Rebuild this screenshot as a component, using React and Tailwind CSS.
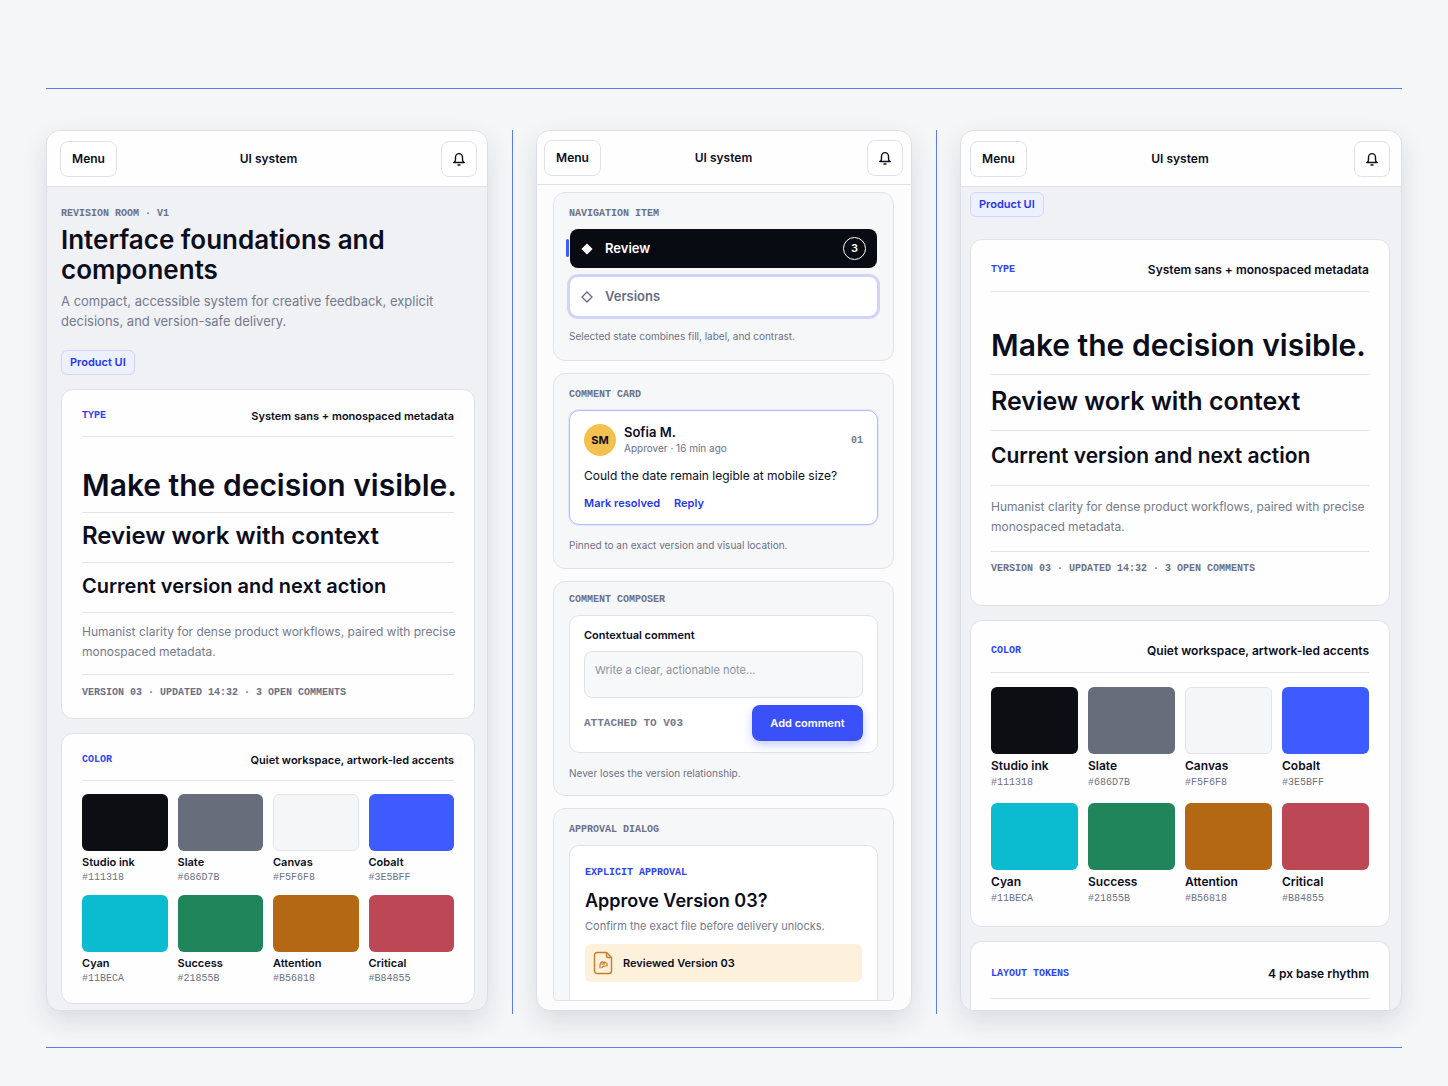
import React from "react";

const SWATCHES = [
  { name: "Studio ink", hex: "#111318", fill: "bg-[#0c0e14]" },
  { name: "Slate", hex: "#686D7B", fill: "bg-[#686d7b]" },
  { name: "Canvas", hex: "#F5F6F8", fill: "bg-[#f5f6f8] border border-[#e2e4ea]" },
  { name: "Cobalt", hex: "#3E5BFF", fill: "bg-[#3e5bff]" },
  { name: "Cyan", hex: "#11BECA", fill: "bg-[#0bbcd0]" },
  { name: "Success", hex: "#21855B", fill: "bg-[#21855b]" },
  { name: "Attention", hex: "#B56818", fill: "bg-[#b56813]" },
  { name: "Critical", hex: "#B84855", fill: "bg-[#bb4854]" },
];

// Spacing for the two densities of the foundation cards
const DENSITY = {
  compact: {
    header: "pt-[18px] pb-3",
    title: "text-[11px]",
    display: "pt-7 pb-[7px]",
    heading: "pt-2 pb-[11px] text-[24px]",
    subheading: "pt-2 pb-[11px] text-[20px]",
    copy: "pt-[9px] pb-3",
    meta: "pt-[10px] pb-[17px]",
    grid: "pt-[13px] pb-4 gap-y-[9px]",
    swatch: "h-[57px] mb-[3px]",
    name: "text-[11px]",
  },
  roomy: {
    header: "pt-[22px] pb-[13px]",
    title: "text-[12px]",
    display: "pt-[33px] pb-[9px]",
    heading: "pt-[11px] pb-[14px] text-[25px]",
    subheading: "pt-[10px] pb-[14px] text-[21px]",
    copy: "pt-[11px] pb-[14px]",
    meta: "pt-[9px] pb-7",
    grid: "pt-[14px] pb-[19px] gap-y-3",
    swatch: "h-[67px] mb-1",
    name: "text-[12px] mb-px",
  },
};

const MONO = "font-['Liberation_Mono',monospace]";

const BellIcon = () => (
  <svg
    viewBox="0 0 16 16"
    className="h-4 w-4"
    fill="none"
    stroke="currentColor"
    strokeWidth="1.4"
    strokeLinecap="round"
    strokeLinejoin="round"
  >
    <path d="M2.6 11.5h10.8" />
    <path d="M3.6 11.3c.7-.9.9-1.800.9-3V6.300a3.500 3.700 0 0 1 7 0v2c0 1.200.2 2.100.9 3" />
    <path d="M7 14h2" />
  </svg>
);

const TopBar = ({ className }) => (
  <header
    className={`grid grid-cols-[1fr_auto_1fr] items-center border-b border-[#dfe2ec] bg-[#fefefe] ${className}`}
  >
    <button className="h-9 w-[57px] justify-self-start rounded-lg border border-[#dfe2ec] bg-white text-[12px] font-semibold">
      Menu
    </button>
    <p className="text-[12px] font-semibold">UI system</p>
    <button
      aria-label="Notifications"
      className="flex h-9 w-9 items-center justify-center justify-self-end rounded-lg border border-[#dfe2ec] bg-white"
    >
      <BellIcon />
    </button>
  </header>
);

const Chip = () => (
  <span className="flex h-[25px] w-fit items-center rounded-md border border-[#cfd5fb] bg-[#edf0fd] px-2 text-[11px] font-semibold text-[#2436f0]">
    Product UI
  </span>
);

const CardHeader = ({ label, title, density, className }) => (
  <div
    className={`flex items-center justify-between border-b border-[#e1e4ed] leading-4 ${
      className || density.header
    }`}
  >
    <h3 className={`text-[10px] font-bold text-[#2f43f5] ${MONO}`}>{label}</h3>
    <p className={`font-semibold ${density.title}`}>{title}</p>
  </div>
);

const TypeCard = ({ density }) => (
  <section className="rounded-xl border border-[#dfe2ec] bg-[#fefefe] px-5">
    <CardHeader label="TYPE" title="System sans + monospaced metadata" density={density} />
    <div className="divide-y divide-[#e1e4ed]">
      <p className={`whitespace-nowrap text-[30px] font-semibold leading-10 ${density.display}`}>
        Make the decision visible.
      </p>
      <p className={`whitespace-nowrap font-semibold leading-[30px] ${density.heading}`}>
        Review work with context
      </p>
      <p className={`whitespace-nowrap font-semibold leading-[30px] ${density.subheading}`}>
        Current version and next action
      </p>
      <p className={`whitespace-nowrap text-[12px] leading-5 text-[#737a8e] ${density.copy}`}>
        Humanist clarity for dense product workflows, paired with precise
        <br />
        monospaced metadata.
      </p>
      <p className={`text-[10px] font-bold leading-4 text-[#6b7186] ${MONO} ${density.meta}`}>
        VERSION 03 · UPDATED 14:32 · 3 OPEN COMMENTS
      </p>
    </div>
  </section>
);

const ColorCard = ({ density }) => (
  <section className="rounded-xl border border-[#dfe2ec] bg-[#fefefe] px-5">
    <CardHeader label="COLOR" title="Quiet workspace, artwork-led accents" density={density} />
    <ul className={`grid grid-cols-4 gap-x-[10px] ${density.grid}`}>
      {SWATCHES.map((swatch) => (
        <li key={swatch.name}>
          <div className={`rounded-md ${swatch.fill} ${density.swatch}`} />
          <p className={`font-semibold leading-4 ${density.name}`}>{swatch.name}</p>
          <p className={`text-[10px] leading-4 text-[#6b7186] ${MONO}`}>{swatch.hex}</p>
        </li>
      ))}
    </ul>
  </section>
);

// A labelled example with a caption under it
const Specimen = ({ label, caption, className, children }) => (
  <section className={`border border-[#dfe2ea] bg-[#f6f7f9] px-[15px] ${className}`}>
    <h3 className={`mb-[7px] text-[10px] font-bold leading-4 text-[#6b7186] ${MONO}`}>{label}</h3>
    {children}
    {caption && <p className="mt-3 text-[10px] leading-4 text-[#6b7186]">{caption}</p>}
  </section>
);

const NavItems = () => (
  <nav className="flex flex-col gap-[9px] px-px">
    <a
      href="#review"
      className="relative flex h-[39px] items-center rounded-lg bg-[#090b13] px-[11px] text-[13px] font-semibold text-white"
    >
      <span className="absolute -left-1 top-[10px] h-[18px] w-[3px] rounded-sm bg-[#3e5bff]" />
      <svg viewBox="0 0 12 12" className="mr-3 h-3 w-3" fill="currentColor">
        <path d="M6 0.4 11.6 6 6 11.6 0.4 6Z" />
      </svg>
      Review
      <span className="ml-auto flex h-[23px] w-[23px] items-center justify-center rounded-full border border-white text-[11px]">
        3
      </span>
    </a>
    <a
      href="#versions"
      className="flex h-[39px] items-center rounded-lg bg-white px-[11px] text-[13px] font-semibold text-[#666c85] ring-[3px] ring-[#d0d4f8]"
    >
      <svg viewBox="0 0 12 12" className="mr-3 h-3 w-3" fill="none" stroke="currentColor" strokeWidth="1.3">
        <path d="M6 1 11 6 6 11 1 6Z" />
      </svg>
      Versions
    </a>
  </nav>
);

const CommentCard = () => (
  <article className="rounded-[10px] border border-[#b4bcfb] bg-white px-[14px] py-[13px] ring-1 ring-[#e4e7fd]">
    <div className="flex items-center">
      <span className="mr-2 flex h-8 w-8 items-center justify-center rounded-full bg-[#f4c150] text-[11px] font-bold">
        SM
      </span>
      <div className="leading-4">
        <p className="text-[13px] font-semibold">Sofia M.</p>
        <p className="text-[10px] text-[#6b7186]">Approver · 16 min ago</p>
      </div>
      <span className={`ml-auto text-[10px] font-bold text-[#737a8e] ${MONO}`}>01</span>
    </div>
    <p className="mt-[10px] text-[12px] leading-5">Could the date remain legible at mobile size?</p>
    <div className="mt-[9px] flex gap-[14px] text-[11px] font-semibold leading-4 text-[#2436f0]">
      <button>Mark resolved</button>
      <button>Reply</button>
    </div>
  </article>
);

const Composer = () => (
  <form
    className="rounded-[10px] border border-[#dfe2ea] bg-white px-[14px] py-[11px]"
    onSubmit={(e) => e.preventDefault()}
  >
    <label htmlFor="note" className="block text-[11px] font-semibold leading-4">
      Contextual comment
    </label>
    <textarea
      id="note"
      placeholder="Write a clear, actionable note..."
      className="mt-2 block h-[47px] w-full resize-none rounded-lg border border-[#dfe2ea] bg-[#f7f8fa] p-[10px] text-[11px] leading-4 placeholder:text-[#8a90a3]"
    />
    <div className="mt-[7px] flex items-center justify-between">
      <span className={`text-[11px] font-bold text-[#737a8e] ${MONO}`}>ATTACHED TO V03</span>
      <button className="h-9 w-[111px] rounded-lg bg-[#3a50f8] text-[11px] font-semibold text-white shadow-[0_4px_10px_rgba(62,91,255,0.3)]">
        Add comment
      </button>
    </div>
  </form>
);

const ApprovalDialog = () => (
  <div className="rounded-t-[10px] border border-b-0 border-[#dfe2ea] bg-white px-[15px] pb-[18px] pt-[19px]">
    <p className={`text-[10px] font-bold leading-4 text-[#2f43f5] ${MONO}`}>EXPLICIT APPROVAL</p>
    <h2 className="mt-[6px] text-[18px] font-semibold leading-7">Approve Version 03?</h2>
    <p className="mt-px text-[11px] leading-5 text-[#737a8e]">
      Confirm the exact file before delivery unlocks.
    </p>
    <div className="mt-2 flex h-[38px] items-center rounded-md bg-[#fef1dc] px-2 text-[11px] font-semibold">
      <svg
        viewBox="0 0 20 24"
        className="mr-[10px] h-6 w-5"
        fill="none"
        stroke="#c67b2b"
        strokeWidth="1.4"
        strokeLinecap="round"
        strokeLinejoin="round"
      >
        <path d="M4 1.5h9.5l5 5V20a2.5 2.5 0 0 1-2.5 2.5H4A2.5 2.5 0 0 1 1.5 20V4A2.5 2.5 0 0 1 4 1.5Z" />
        <path d="M13.5 2v3A1.5 1.5 0 0 0 15 6.5h3" />
        <path d="M7 17v-4h4.5M7.5 12l2-1.5L11 12M11.5 11l2.5 1.5V15h-3.5M9 16.5l1.5-1.5" strokeWidth="1.2" />
      </svg>
      Reviewed Version 03
    </div>
  </div>
);

const Panel = ({ className, children }) => (
  <div
    className={`flex min-w-0 flex-col overflow-hidden rounded-[14px] border border-[#dcdfe6] shadow-[0_10px_24px_rgba(30,36,60,0.12)] ${className}`}
  >
    {children}
  </div>
);

const Divider = () => <div className="-mb-[3px] w-px justify-self-center bg-[#5c7cf5]" />;

const App = () => {
  return (
    <div className="min-h-screen bg-[#f5f6f8] px-[46px] pb-[37px] pt-[88px] font-['Inter',sans-serif] text-[#0b0d1c]">
      <main className="grid grid-cols-[442fr_48px_376fr_48px_442fr] border-y border-[#5c7cf5] pb-9 pt-[41px]">
        {/* Foundations, top of the page */}
        <Panel className="bg-[#eff1f5]">
          <TopBar className="h-14 pl-[13px] pr-[10px]" />
          <div className="pb-[6px] pl-[14px] pr-3 pt-[19px]">
            <p className={`text-[10px] font-bold leading-4 text-[#6b7186] ${MONO}`}>REVISION ROOM · V1</p>
            <h1 className="mt-[3px] text-[26px] font-semibold leading-[30px]">
              Interface foundations and components
            </h1>
            <p className="mb-[19px] mt-[6px] text-[13px] leading-5 text-[#737a8e]">
              A compact, accessible system for creative feedback, explicit decisions, and version-safe delivery.
            </p>
            <Chip />
            <div className="mt-[14px] flex flex-col gap-[14px]">
              <TypeCard density={DENSITY.compact} />
              <ColorCard density={DENSITY.compact} />
            </div>
          </div>
        </Panel>

        <Divider />

        {/* Components */}
        <Panel className="bg-[#fcfcfd]">
          <TopBar className="h-[54px] pl-[7px] pr-2" />
          <div className="flex flex-col gap-3 pb-[9px] pl-4 pr-[17px] pt-[7px]">
            <Specimen
              label="NAVIGATION ITEM"
              caption="Selected state combines fill, label, and contrast."
              className="rounded-xl pb-4 pt-[13px]"
            >
              <NavItems />
            </Specimen>
            <Specimen
              label="COMMENT CARD"
              caption="Pinned to an exact version and visual location."
              className="rounded-xl pb-[15px] pt-[13px]"
            >
              <CommentCard />
            </Specimen>
            <Specimen
              label="COMMENT COMPOSER"
              caption="Never loses the version relationship."
              className="rounded-xl pb-[14px] pt-[10px]"
            >
              <Composer />
            </Specimen>
            <Specimen label="APPROVAL DIALOG" className="rounded-b-sm rounded-t-xl pt-[13px]">
              <ApprovalDialog />
            </Specimen>
          </div>
        </Panel>

        <Divider />

        {/* Foundations, scrolled down */}
        <Panel className="bg-[#eff1f5]">
          <TopBar className="h-14 pl-[9px] pr-[11px]" />
          <div className="flex flex-1 flex-col pl-[9px] pr-[11px] pt-[5px]">
            <Chip />
            <div className="mt-[22px] flex flex-1 flex-col gap-[14px]">
              <TypeCard density={DENSITY.roomy} />
              <ColorCard density={DENSITY.roomy} />
              <section className="flex-1 rounded-t-xl border border-b-0 border-[#dfe2ec] bg-[#fefefe] px-5 pb-2">
                <CardHeader
                  label="LAYOUT TOKENS"
                  title="4 px base rhythm"
                  density={DENSITY.roomy}
                  className="pb-4 pt-6"
                />
              </section>
            </div>
          </div>
        </Panel>
      </main>
    </div>
  );
};

export default App;
